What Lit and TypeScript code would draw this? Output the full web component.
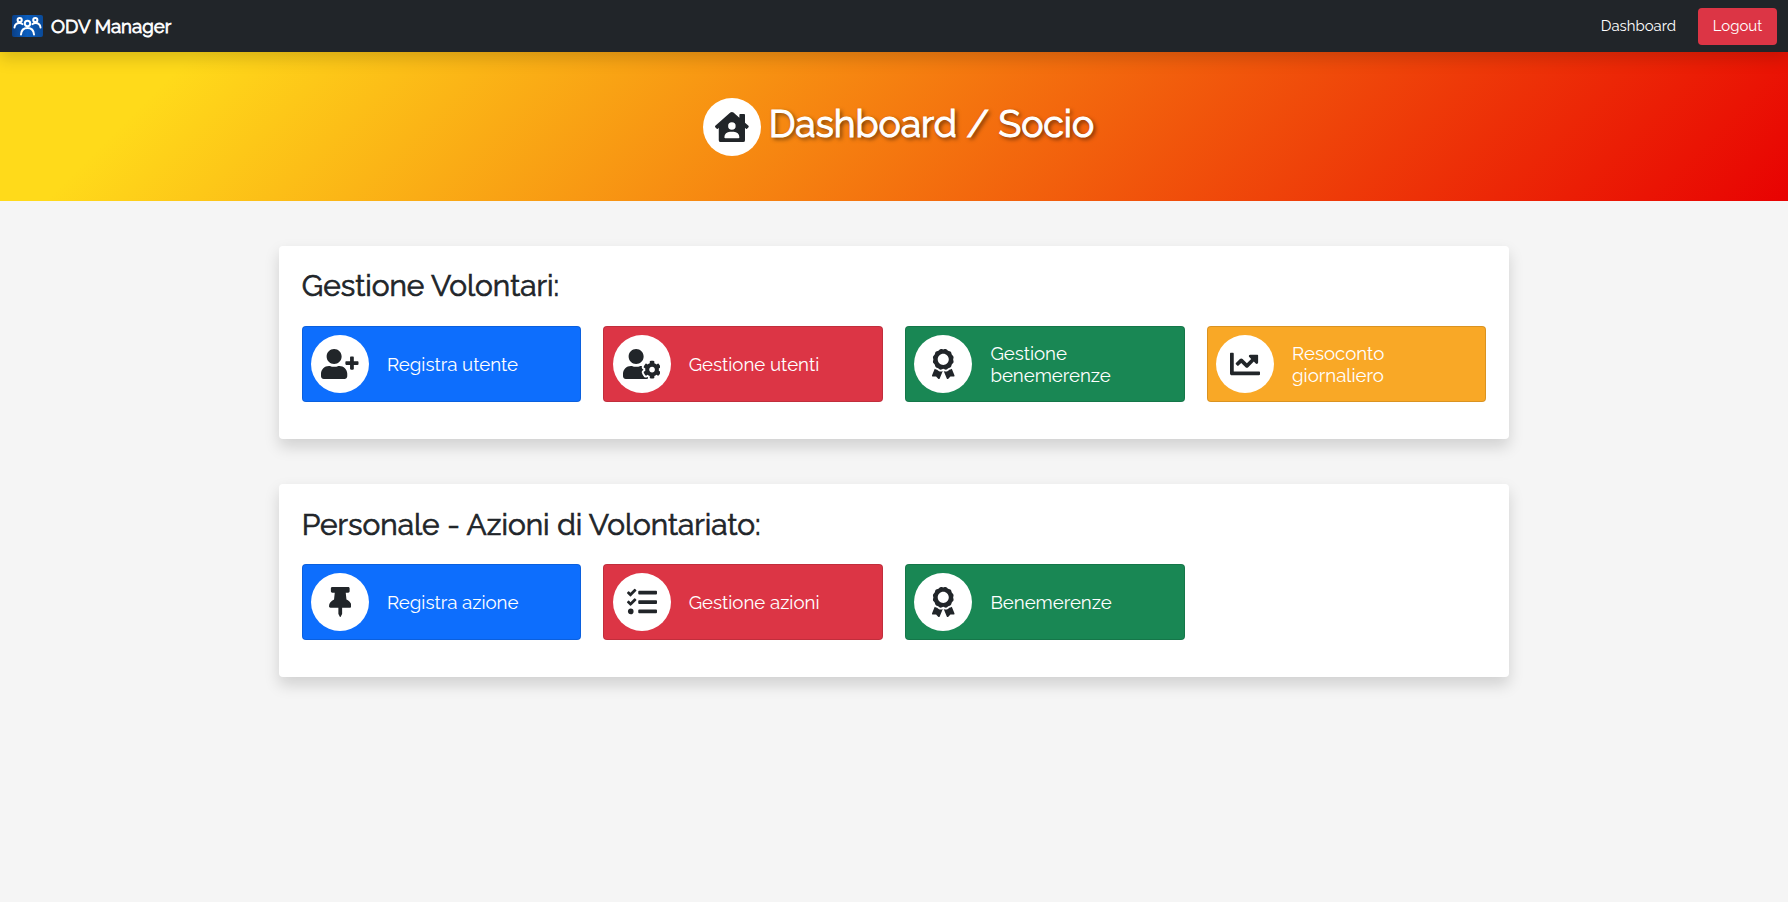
import { LitElement, html, css, svg } from "lit";
import { customElement, property } from "lit/decorators.js";

type Icon = { w: number; d: string };

const ICONS: Record<string, Icon> = {
  home: { w: 576, d: "M570.69,236.27,512,184.44V48a16,16,0,0,0-16-16H432a16,16,0,0,0-16,16V99.67L314.78,10.3C308.5,4.61,296.53,0,288,0s-20.46,4.61-26.74,10.3l-256,226A18.27,18.27,0,0,0,0,248.2a18.64,18.64,0,0,0,4.09,10.71L25.5,282.7a21.14,21.14,0,0,0,12,5.3,21.67,21.67,0,0,0,10.69-4.11l15.9-14V480a32,32,0,0,0,32,32H480a32,32,0,0,0,32-32V269.88l15.91,14A21.94,21.94,0,0,0,538.63,288a20.89,20.89,0,0,0,11.87-5.31l21.41-23.81A21.64,21.64,0,0,0,576,248.19,21,21,0,0,0,570.69,236.27ZM288,176a64,64,0,1,1-64,64A64,64,0,0,1,288,176ZM400,448H176a16,16,0,0,1-16-16,96,96,0,0,1,96-96h64a96,96,0,0,1,96,96A16,16,0,0,1,400,448Z" },
  userPlus: { w: 640, d: "M624 208h-64v-64c0-8.8-7.2-16-16-16h-32c-8.8 0-16 7.2-16 16v64h-64c-8.8 0-16 7.2-16 16v32c0 8.8 7.2 16 16 16h64v64c0 8.8 7.2 16 16 16h32c8.8 0 16-7.2 16-16v-64h64c8.8 0 16-7.2 16-16v-32c0-8.8-7.2-16-16-16zm-400 48c70.7 0 128-57.3 128-128S294.7 0 224 0 96 57.3 96 128s57.3 128 128 128zm89.6 32h-16.7c-22.2 10.2-46.9 16-72.9 16s-50.6-5.8-72.9-16h-16.7C60.2 288 0 348.2 0 422.4V464c0 26.5 21.5 48 48 48h352c26.5 0 48-21.5 48-48v-41.6c0-74.2-60.2-134.4-134.4-134.4z" },
  userCog: { w: 640, d: "M610.5 373.3c2.6-14.1 2.6-28.5 0-42.6l25.8-14.9c3-1.7 4.3-5.2 3.3-8.5-6.7-21.6-18.2-41.2-33.2-57.4-2.3-2.5-6-3.1-9-1.4l-25.8 14.9c-10.9-9.3-23.4-16.5-36.9-21.3v-29.8c0-3.4-2.4-6.4-5.7-7.1-22.3-5-45-4.8-66.2 0-3.3.7-5.7 3.7-5.7 7.1v29.8c-13.5 4.8-26 12-36.9 21.3l-25.8-14.9c-2.9-1.7-6.7-1.1-9 1.4-15 16.2-26.5 35.8-33.2 57.4-1 3.3.4 6.8 3.3 8.5l25.8 14.9c-2.6 14.1-2.6 28.5 0 42.6l-25.8 14.9c-3 1.7-4.3 5.2-3.3 8.5 6.7 21.6 18.2 41.1 33.2 57.4 2.3 2.5 6 3.1 9 1.4l25.8-14.9c10.9 9.3 23.4 16.5 36.9 21.3v29.8c0 3.4 2.4 6.4 5.7 7.1 22.3 5 45 4.8 66.2 0 3.3-.7 5.7-3.7 5.7-7.1v-29.8c13.5-4.8 26-12 36.9-21.3l25.8 14.9c2.9 1.7 6.7 1.1 9-1.4 15-16.2 26.5-35.8 33.2-57.4 1-3.3-.4-6.8-3.3-8.5l-25.8-14.9zM496 400.5c-26.8 0-48.5-21.8-48.5-48.5s21.8-48.5 48.5-48.5 48.5 21.8 48.5 48.5-21.7 48.5-48.5 48.5zM224 256c70.7 0 128-57.3 128-128S294.7 0 224 0 96 57.3 96 128s57.3 128 128 128zm201.2 226.5c-2.3-1.2-4.6-2.6-6.8-3.9l-7.9 4.6c-6 3.4-12.8 5.3-19.6 5.3-10.9 0-21.4-4.6-28.9-12.6-18.3-19.8-32.3-43.9-40.2-69.6-5.5-17.7 1.9-36.4 17.9-45.7l7.9-4.6c-.1-2.6-.1-5.2 0-7.8l-7.9-4.6c-16-9.2-23.4-28-17.9-45.7.9-2.9 2.2-5.8 3.2-8.7-3.8-.3-7.5-1.2-11.4-1.2h-16.7c-22.2 10.2-46.9 16-72.9 16s-50.6-5.8-72.9-16h-16.7C60.2 288 0 348.2 0 422.4V464c0 26.5 21.5 48 48 48h352c10.1 0 19.5-3.2 27.2-8.5-1.2-3.8-2-7.7-2-11.8v-9.2z" },
  award: { w: 384, d: "M97.12 362.63c-8.69-8.69-4.16-6.24-25.12-11.85-9.51-2.55-17.87-7.45-25.43-13.32L1.2 448.7c-4.39 10.77 3.81 22.47 15.43 22.03l52.69-2.01L105.56 507c8 8.44 22.04 5.81 26.43-4.96l52.05-127.62c-10.84 6.04-22.87 9.58-35.31 9.58-19.5 0-37.82-7.59-51.61-21.37zM382.8 448.7l-45.37-111.24c-7.56 5.88-15.92 10.77-25.43 13.32-21.07 5.64-16.45 3.18-25.12 11.85-13.79 13.78-32.12 21.37-51.62 21.37-12.44 0-24.47-3.55-35.31-9.58L252 502.04c4.39 10.77 18.44 13.4 26.43 4.96l36.25-38.28 52.69 2.01c11.62.44 19.82-11.27 15.43-22.03zM263 340c15.28-15.55 17.03-14.21 38.79-20.14 13.89-3.79 24.75-14.84 28.47-28.98 7.48-28.4 5.54-24.97 25.95-45.75 10.17-10.35 14.14-25.44 10.42-39.58-7.47-28.38-7.48-24.42 0-52.83 3.72-14.14-.25-29.23-10.42-39.58-20.41-20.78-18.47-17.36-25.95-45.75-3.72-14.14-14.58-25.19-28.47-28.98-27.88-7.61-24.52-5.62-44.95-26.41-10.17-10.35-25-14.4-38.89-10.61-27.87 7.6-23.98 7.61-51.9 0-13.89-3.79-28.72.25-38.89 10.61-20.41 20.78-17.05 18.8-44.94 26.41-13.89 3.79-24.75 14.84-28.47 28.98-7.47 28.39-5.54 24.97-25.95 45.75-10.17 10.35-14.15 25.44-10.42 39.58 7.47 28.36 7.48 24.4 0 52.82-3.72 14.14.25 29.23 10.42 39.59 20.41 20.77 18.47 17.35 25.95 45.75 3.72 14.14 14.58 25.19 28.47 28.98C104.6 325.96 106.27 325 121 340c13.23 13.47 33.84 15.88 49.74 5.82a39.676 39.676 0 0 1 42.53 0c15.89 10.06 36.5 7.65 49.73-5.82zM97.66 175.96c0-53.03 42.24-96.02 94.34-96.02s94.34 42.99 94.34 96.02-42.24 96.02-94.34 96.02-94.34-42.99-94.34-96.02z" },
  chart: { w: 512, d: "M496 384H64V80c0-8.84-7.16-16-16-16H16C7.16 64 0 71.16 0 80v336c0 17.67 14.33 32 32 32h464c8.84 0 16-7.16 16-16v-32c0-8.84-7.16-16-16-16zM464 96H345.94c-21.38 0-32.09 25.85-16.97 40.97l32.4 32.4L288 242.75l-73.37-73.37c-12.5-12.5-32.76-12.5-45.25 0l-68.69 68.69c-6.25 6.25-6.25 16.38 0 22.63l22.62 22.62c6.25 6.25 16.38 6.25 22.63 0L192 237.25l73.37 73.37c12.5 12.5 32.76 12.5 45.25 0l96-96 32.4 32.4c15.12 15.12 40.97 4.41 40.97-16.97V112c.01-8.84-7.15-16-15.99-16z" },
  pin: { w: 384, d: "M298.028 214.267L285.793 96H328c13.255 0 24-10.745 24-24V24c0-13.255-10.745-24-24-24H56C42.745 0 32 10.745 32 24v48c0 13.255 10.745 24 24 24h42.207L85.972 214.267C37.465 236.82 0 277.261 0 328c0 13.255 10.745 24 24 24h136v104.007c0 1.242.289 2.467.845 3.578l24 48c2.941 5.882 11.364 5.893 14.311 0l24-48a8.008 8.008 0 0 0 .845-3.578V352h136c13.255 0 24-10.745 24-24-.001-51.183-37.983-91.42-85.973-113.733z" },
  tasks: { w: 512, d: "M139.61 35.5a12 12 0 0 0-17 0L58.93 98.81l-22.7-22.12a12 12 0 0 0-17 0L3.53 92.41a12 12 0 0 0 0 17l47.59 47.4a12.78 12.78 0 0 0 17.61 0l15.59-15.62L156.52 69a12.09 12.09 0 0 0 .09-17zm0 159.19a12 12 0 0 0-17 0l-63.68 63.72-22.7-22.1a12 12 0 0 0-17 0L3.53 252a12 12 0 0 0 0 17L51 316.5a12.77 12.77 0 0 0 17.6 0l15.7-15.69 72.2-72.22a12 12 0 0 0 .09-16.9zM64 368c-26.49 0-48.59 21.5-48.59 48S37.53 464 64 464a48 48 0 0 0 0-96zm432 16H208a16 16 0 0 0-16 16v32a16 16 0 0 0 16 16h288a16 16 0 0 0 16-16v-32a16 16 0 0 0-16-16zm0-320H208a16 16 0 0 0-16 16v32a16 16 0 0 0 16 16h288a16 16 0 0 0 16-16V80a16 16 0 0 0-16-16zm0 160H208a16 16 0 0 0-16 16v32a16 16 0 0 0 16 16h288a16 16 0 0 0 16-16v-32a16 16 0 0 0-16-16z" },
};

@customElement("round-icon")
class RoundIcon extends LitElement {
  @property() name = "home";
  static styles = css`
    :host { display: flex; flex: none; width: 58px; height: 58px; border-radius: 50%; background: #fff; align-items: center; justify-content: center; }
    svg { display: block; height: 30px; fill: #212529; }
  `;
  render() {
    const icon = ICONS[this.name];
    return html`<svg viewBox="0 0 ${icon.w} 512">${svg`<path d=${icon.d}></path>`}</svg>`;
  }
}

type Action = { icon: string; lines: string[]; tone: string };

const VOLUNTEERS: Action[] = [
  { icon: "userPlus", lines: ["Registra utente"], tone: "blue" },
  { icon: "userCog", lines: ["Gestione utenti"], tone: "red" },
  { icon: "award", lines: ["Gestione", "benemerenze"], tone: "green" },
  { icon: "chart", lines: ["Resoconto", "giornaliero"], tone: "amber" },
];
const PERSONAL: Action[] = [
  { icon: "pin", lines: ["Registra azione"], tone: "blue" },
  { icon: "tasks", lines: ["Gestione azioni"], tone: "red" },
  { icon: "award", lines: ["Benemerenze"], tone: "green" },
];

@customElement("app-root")
class AppRoot extends LitElement {
  static styles = css`
    :host { display: block; min-height: 902px; background: #f5f5f5; color: #212529; font-family: Raleway, Lato, sans-serif; font-size: 14.93px; line-height: 1.5; }
    * { box-sizing: border-box; }
    h1, h2 { margin: 0; line-height: 1.2; font-weight: 400; -webkit-text-stroke: 0.7px currentColor; }
    .nav { position: relative; z-index: 1; display: flex; align-items: center; justify-content: space-between; height: 52px; padding: 0 11px 0 12px; background: #212529; box-shadow: 0 7px 15px rgba(0, 0, 0, 0.15); color: #fff; }
    .brand { display: flex; align-items: center; gap: 8px; font-size: 18.66px; font-weight: 400; -webkit-text-stroke: 0.8px currentColor; }
    .brand span { padding-top: 1px; }
    .logo { display: block; width: 31px; height: 22px; }
    .links { display: flex; align-items: center; gap: 22px; }
    .logout { display: flex; align-items: center; justify-content: center; width: 79px; height: 37px; border-radius: 4px; background: #dc3545; }
    .hero { display: flex; align-items: center; justify-content: center; gap: 8px; height: 149px; padding-left: 9px; background: linear-gradient(135deg, #ffda1a 10%, #e80202 100%); color: #fff; }
    .hero h1 { font-size: 37.33px; -webkit-text-stroke-width: 1.1px; text-shadow: 2px 2px 4px rgba(0, 0, 0, 0.7); margin-top: -5px; }
    .main { display: flex; flex-direction: column; gap: 45.2px; width: 1230px; margin: 45px auto 0; }
    .card { height: 193px; padding: 22.4px 22.8px; border-radius: 4px; background: #fff; box-shadow: 0 7.5px 15px rgba(0, 0, 0, 0.15); }
    .card h2 { font-size: 29.86px; margin-bottom: 22px; }
    .grid { display: grid; grid-template-columns: repeat(4, 1fr); gap: 22.4px; align-items: start; }
    .btn { display: flex; align-items: center; gap: 18px; height: 75.5px; padding: 0 8.2px; border: 1px solid rgba(0, 0, 0, 0.12); border-radius: 4px; color: #fff; font-size: 18.66px; line-height: 22.4px; }
    .blue { background-color: #0d6efd; }
    .red { background-color: #dc3545; }
    .green { background-color: #198754; }
    .amber { background-color: #f9a826; }
    .line { display: block; }
  `;

  private section(title: string, actions: Action[]) {
    return html`<section class="card">
      <h2><span>${title}</span></h2>
      <div class="grid">
        ${actions.map((a) => html`<div class="btn ${a.tone}">
          <round-icon name=${a.icon}></round-icon>
          <div>${a.lines.map((l) => html`<span class="line">${l}</span>`)}</div>
        </div>`)}
      </div>
    </section>`;
  }

  render() {
    return html`
      <nav class="nav">
        <div class="brand">
          <svg class="logo" viewBox="0 0 31 22">
            <defs><linearGradient id="g"><stop offset="0" stop-color="#0a3f86"></stop><stop offset=".5" stop-color="#0b5fc0"></stop><stop offset="1" stop-color="#0a4a98"></stop></linearGradient></defs>
            <rect width="31" height="22" rx="2" fill="url(#g)"></rect>
            <g fill="none" stroke="#fff" stroke-width="2" stroke-linecap="round">
              <circle cx="15.5" cy="8.5" r="2.7"></circle><circle cx="7.7" cy="5" r="2.1"></circle><circle cx="23.3" cy="5" r="2.1"></circle>
              <path d="M9 19.5c.3-4.2 3-6.500 6.500-6.500s6.200 2.300 6.500 6.500M2.500 12.500c.3-3 2.200-4.600 5-4.600 1.300 0 2.300.4 3 1.200M28.500 12.500c-.3-3-2.200-4.600-5-4.600-1.300 0-2.300.4-3 1.200"></path>
            </g>
          </svg>
          <span>ODV Manager</span>
        </div>
        <div class="links"><span>Dashboard</span><span class="logout">Logout</span></div>
      </nav>
      <header class="hero"><round-icon name="home"></round-icon><h1>Dashboard / Socio</h1></header>
      <main class="main">
        ${this.section("Gestione Volontari:", VOLUNTEERS)}
        ${this.section("Personale - Azioni di Volontariato:", PERSONAL)}
      </main>`;
  }
}
